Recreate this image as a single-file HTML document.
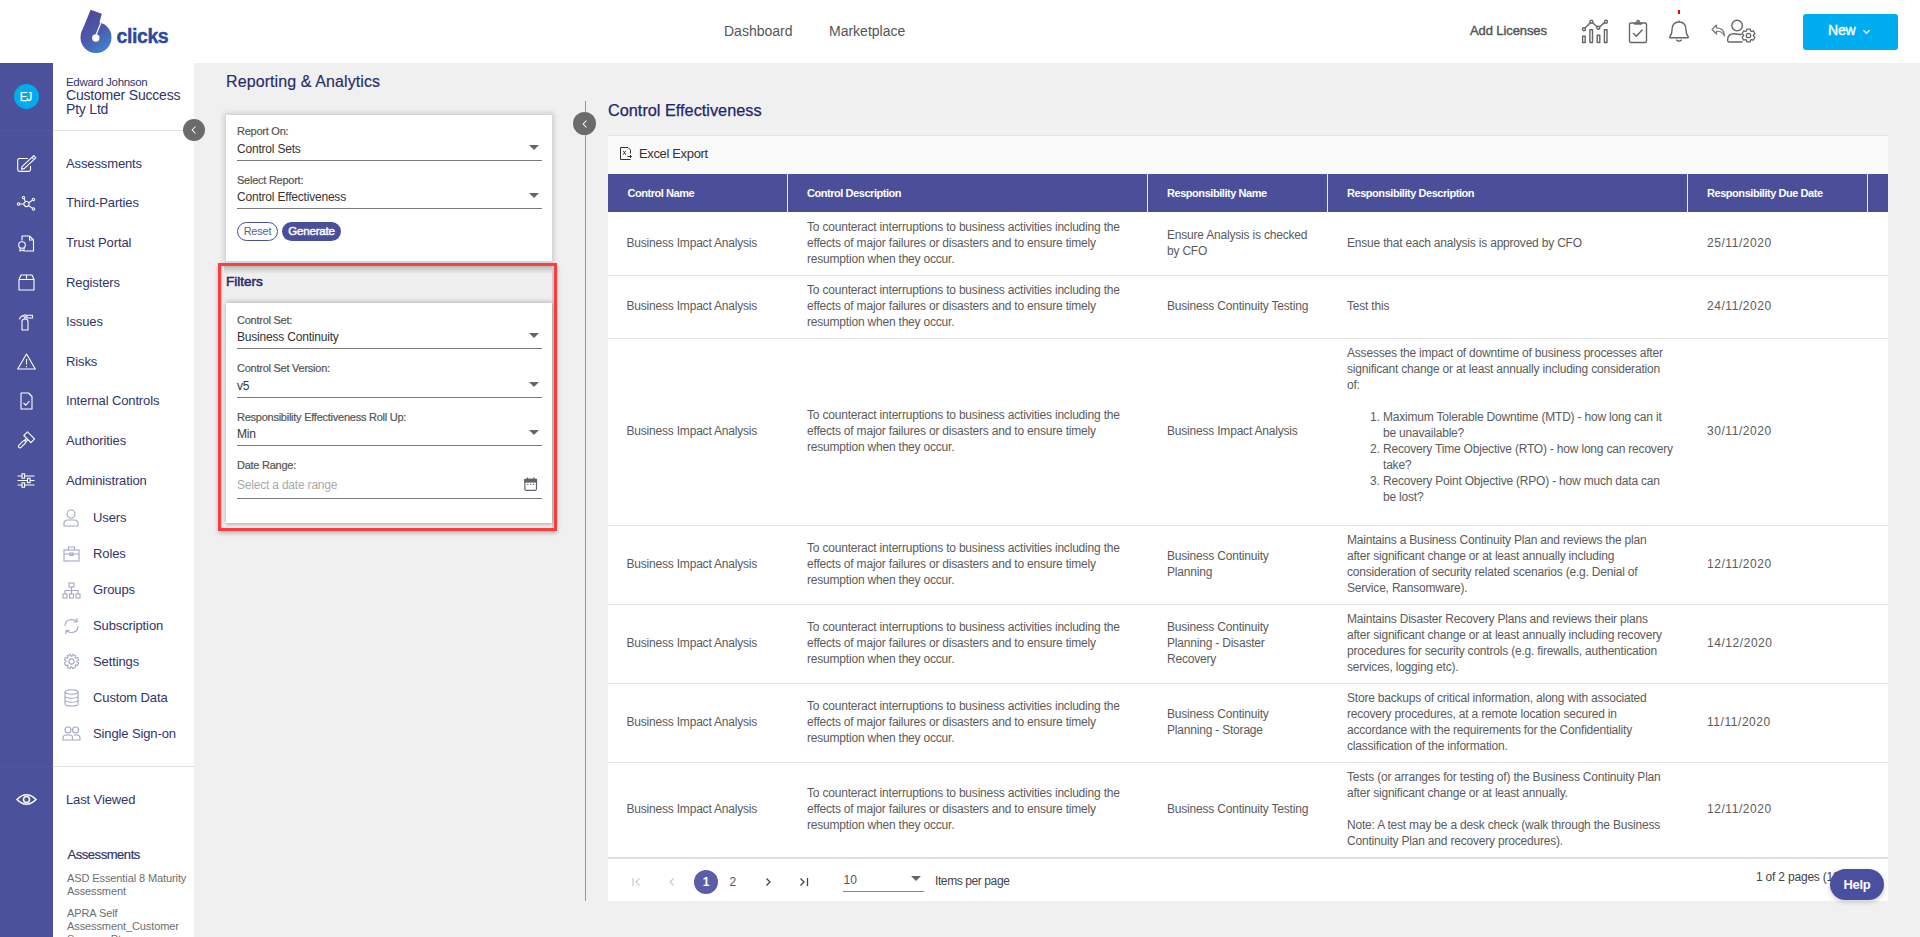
<!DOCTYPE html>
<html><head><meta charset="utf-8">
<style>
*{box-sizing:border-box;margin:0;padding:0}
html,body{width:1920px;height:937px;overflow:hidden;background:#f0f0f0;font-family:"Liberation Sans",sans-serif;}
.abs{position:absolute}
#hdr{position:absolute;left:0;top:0;width:1920px;height:63px;background:#fff}
#rail{position:absolute;left:0;top:63px;width:53px;height:874px;background:#4c519b}
#nav{position:absolute;left:53px;top:63px;width:141px;height:874px;background:#fff}
.t{position:absolute;white-space:nowrap;line-height:1}
.ni{position:absolute;left:13px;font-size:13px;color:#30346b;white-space:nowrap;line-height:1;letter-spacing:-0.12px}
.si{position:absolute;left:40px;font-size:13px;color:#30346b;white-space:nowrap;line-height:1;letter-spacing:-0.12px}
.sic{position:absolute;left:9px;width:18px;height:18px}
.ric{position:absolute;left:16px;width:20px;height:20px}
svg{display:block;overflow:visible}
.th{position:absolute;top:188px;font-size:11px;font-weight:bold;color:#fff;white-space:nowrap;line-height:1;letter-spacing:-0.45px}
.row{position:absolute;left:608px;width:1280px;border-bottom:1px solid #e2e2e2}
.td{position:absolute;top:-1px;display:flex;align-items:center;font-size:12px;line-height:16px;color:#5b5b5b;white-space:nowrap;letter-spacing:-0.2px}
.ol{list-style:none;margin:0;padding:0}
.ol li{position:relative;padding-left:36px}
.ol .n{position:absolute;left:23px}
.card{background:#fff;box-shadow:0 0 5px 2px rgba(0,0,0,0.15)}
.lbl{position:absolute;font-size:11px;color:#555;white-space:nowrap;line-height:1;letter-spacing:-0.25px;-webkit-text-stroke:0.2px #555}
.val{position:absolute;font-size:12px;color:#333;white-space:nowrap;line-height:1;letter-spacing:-0.2px}
.uline{position:absolute;height:1px;background:#7a7a7a}
.tri{position:absolute;width:0;height:0;border-left:5px solid transparent;border-right:5px solid transparent;border-top:5px solid #666}

</style></head>
<body>
<!-- HEADER -->
<div id="hdr">
  <svg class="abs" style="left:60px;top:0px" width="60" height="60" viewBox="0 0 60 60">
    <defs>
      <linearGradient id="lg" gradientUnits="userSpaceOnUse" x1="24" y1="20" x2="48" y2="50"><stop offset="0" stop-color="#4d4b9c"/><stop offset="0.45" stop-color="#4b5aab"/><stop offset="1" stop-color="#3e84d0"/></linearGradient>
    </defs>
    <path d="M30.6 9.7 L41.8 13.8 L36.6 33 L36 37.5 L21.64 31.65 Z" fill="url(#lg)"/>
    <circle cx="36" cy="37.5" r="15.5" fill="url(#lg)"/>
    <path d="M41.6 21 L36.2 34.5" stroke="#fff" stroke-width="1.2"/>
    <circle cx="35.8" cy="38" r="3.7" fill="#fff"/>
  </svg>
  <div class="t" style="left:116.5px;top:27px;font-size:19.5px;font-weight:bold;color:#2c48a0;letter-spacing:-0.4px;-webkit-text-stroke:0.4px #2c48a0">clicks</div>
  <div class="t" style="left:724px;top:24px;font-size:14px;color:#555">Dashboard</div>
  <div class="t" style="left:829px;top:24px;font-size:14px;color:#555">Marketplace</div>
  <div class="t" style="left:1470px;top:24px;font-size:13px;color:#555;letter-spacing:-0.1px;-webkit-text-stroke:0.4px #555">Add Licenses</div>
  <div class="abs" style="left:1803px;top:14px;width:95px;height:36px;background:#00acf0;border-radius:3px"></div>

  <!-- chart icon -->
  <svg class="abs" style="left:1581px;top:19px" width="28" height="25" viewBox="0 0 28 25" fill="none" stroke="#666" stroke-width="1.4" stroke-linejoin="round">
    <circle cx="2.9" cy="10.2" r="1.5"/><circle cx="10.4" cy="2.7" r="1.5"/><circle cx="17.3" cy="8.7" r="1.5"/><circle cx="24.9" cy="2.7" r="1.5"/>
    <path d="M4 9.1 L9.3 3.8 M11.6 3.7 L16.1 7.7 M18.6 7.8 L23.6 3.6"/>
    <rect x="1.6" y="17.2" width="2.6" height="6.3"/><rect x="8.9" y="10.7" width="2.6" height="12.8"/><rect x="16.2" y="16.2" width="2.6" height="7.3"/><rect x="23.4" y="10.7" width="2.6" height="12.8"/>
  </svg>
  <!-- clipboard -->
  <svg class="abs" style="left:1628px;top:19px" width="20" height="25" viewBox="0 0 20 25" fill="none" stroke="#666" stroke-width="1.4" stroke-linejoin="round">
    <rect x="1.5" y="4" width="17" height="19.5" rx="1.5"/><path d="M6 4.8 H14" stroke-width="1.8"/><circle cx="10" cy="2.8" r="1.3"/>
    <path d="M5 14 L8.3 17.2 L14.5 10.5"/>
  </svg>
  <!-- bell -->
  <svg class="abs" style="left:1668px;top:19px" width="22" height="25" viewBox="0 0 22 25" fill="none" stroke="#666" stroke-width="1.4" stroke-linejoin="round">
    <path d="M11 1.5 V3 M11 3 Q4 3 4 11 Q4 15 2 17.5 Q1 19 3 18.8 H19 Q21 19 20 17.5 Q18 15 18 11 Q18 3 11 3 Z"/><path d="M8.3 20.8 Q11 23.5 13.7 20.8"/>
  </svg>
  <div class="abs" style="left:1678px;top:10px;width:2px;height:4px;background:#f00"></div>
  <!-- reply arrow -->
  <svg class="abs" style="left:1711px;top:24px" width="16" height="14" viewBox="0 0 16 14" fill="none" stroke="#777" stroke-width="1.2" stroke-linejoin="round">
    <path d="M5.5 1 L1 5.5 L5.5 10 V7.3 Q11 6.8 13.5 12 Q13.5 4 5.5 3.8 Z"/>
  </svg>
  <!-- user gear -->
  <svg class="abs" style="left:1726px;top:19px" width="31" height="25" viewBox="0 0 31 25" fill="none" stroke="#666" stroke-width="1.4" stroke-linejoin="round">
    <circle cx="11.1" cy="6.6" r="5.3"/><path d="M16.5 23 H3 Q1.6 23 1.6 21.3 Q1.6 14.8 8 14.8 Q10.5 14.8 12 15.3 Q13.5 15.6 15.5 15.3"/>
  </svg>
  <svg class="abs" style="left:1740.2px;top:26.5px" width="17" height="17" viewBox="-8.5 -8.5 17 17" fill="#fff" stroke="#666" stroke-width="1.3" stroke-linejoin="round"><path d="M2.02 4.57 L1.72 6.47 L-1.72 6.47 L-2.02 4.57 L-2.95 4.04 L-4.75 4.73 L-6.47 1.75 L-4.97 0.54 L-4.97 -0.54 L-6.47 -1.75 L-4.75 -4.73 L-2.95 -4.04 L-2.02 -4.57 L-1.72 -6.47 L1.72 -6.47 L2.02 -4.57 L2.95 -4.04 L4.75 -4.73 L6.47 -1.75 L4.97 -0.54 L4.97 0.54 L6.47 1.75 L4.75 4.73 L2.95 4.04 Z"/><circle cx="0" cy="0" r="2.2"/></svg>
  <div class="t" style="left:1828px;top:23px;font-size:14px;color:#fff;letter-spacing:-0.2px;-webkit-text-stroke:0.4px #fff">New</div>
  <svg class="abs" style="left:1861.5px;top:28.5px" width="9" height="6" viewBox="0 0 9 6" fill="none" stroke="#fff" stroke-width="1.4"><path d="M1.5 1.2 L4.5 4.2 L7.5 1.2"/></svg>
</div>
<!-- RAIL -->
<div id="rail">
  <div class="abs" style="left:14px;top:21px;width:25px;height:25px;border-radius:50%;background:#00acf0;color:#fff;font-size:12px;text-align:center;line-height:25px;-webkit-text-stroke:0.25px #fff"><span style="display:inline-block;transform:translate(-0.5px,1px) scaleX(0.95);letter-spacing:-0.9px">EJ</span></div>
  <div class="abs" style="left:0;top:67px;width:53px;height:1px;background:repeating-linear-gradient(90deg,#6367aa 0 1px,transparent 1px 4px)"></div>

  <!-- pencil -->
  <svg class="abs" style="left:12px;top:87px" width="30" height="26" viewBox="0 0 30 26" fill="none" stroke="#fff" stroke-width="1.1" stroke-linejoin="round">
    <path d="M15.8 8.5 H7.5 Q5.7 8.5 5.7 10.3 V19.6 Q5.7 21.4 7.5 21.4 H16.7 Q18.5 21.4 18.5 19.6 V16.1"/>
    <path d="M9.4 19.2 L10.2 16.4 L21.8 5.6 L23.8 7.8 L12.2 18.6 Z M20 7.3 L22 9.5"/>
  </svg>
  <!-- network -->
  <svg class="abs" style="left:17px;top:133px" width="19" height="15" viewBox="0 0 19 15" fill="none" stroke="#fff" stroke-width="1.05">
    <circle cx="9.5" cy="8" r="2.6"/><circle cx="6.5" cy="1.6" r="1.2"/><circle cx="16.5" cy="3.5" r="1.2"/><circle cx="1.6" cy="8" r="1.2"/><circle cx="16.5" cy="13" r="1.2"/>
    <path d="M7 2.8 L8.5 5.6 M15.4 4.2 L11.8 6.8 M2.8 8 H6.9 M15.4 12.2 L11.6 9.6"/>
  </svg>
  <!-- cert doc -->
  <svg class="abs" style="left:17px;top:172px" width="18" height="17" viewBox="0 0 18 17" fill="none" stroke="#fff" stroke-width="1.1" stroke-linejoin="round">
    <path d="M5 5.5 V1 H12.5 L16.5 5 V16 H7.5"/><path d="M12.5 1 V5 H16.5"/>
    <circle cx="5" cy="10" r="3.3"/><path d="M3 13 V16 L5 15 L7 16 V13"/>
  </svg>
  <!-- box -->
  <svg class="abs" style="left:18px;top:211px" width="17" height="17" viewBox="0 0 17 17" fill="none" stroke="#fff" stroke-width="1.1" stroke-linejoin="round">
    <path d="M1 5.5 L3 1 H14 L16 5.5 V16 H1 Z M1 5.5 H16 M8.5 1 V5.5"/>
  </svg>
  <!-- extinguisher -->
  <svg class="abs" style="left:18px;top:250px" width="16" height="18" viewBox="0 0 16 18" fill="none" stroke="#fff" stroke-width="1.1" stroke-linejoin="round">
    <path d="M4 17 V8.7 Q4 6 7 6 Q10 6 10 8.7 V17 Z"/><path d="M7 6 V4.2"/><circle cx="7" cy="3" r="1.2"/><rect x="8.8" y="2.2" width="5.7" height="2.8"/><path d="M5.8 2.6 Q2.6 2.8 1.2 6.4"/>
  </svg>
  <!-- warning -->
  <svg class="abs" style="left:17px;top:290px" width="19" height="17" viewBox="0 0 19 17" fill="none" stroke="#fff" stroke-width="1.1" stroke-linejoin="round">
    <path d="M9.5 1 L18.3 16 H0.7 Z"/><path d="M9.5 6 V11.5 M9.5 13 V14.2"/>
  </svg>
  <!-- doc check -->
  <svg class="abs" style="left:20px;top:329px" width="13" height="18" viewBox="0 0 13 18" fill="none" stroke="#fff" stroke-width="1.1" stroke-linejoin="round">
    <path d="M1 1 H8.5 L12 4.5 V17 H1 Z"/><path d="M3.5 11 L5.8 13.2 L9.5 9"/>
  </svg>
  <!-- gavel -->
  <svg class="abs" style="left:17px;top:369px" width="18" height="17" viewBox="0 0 18 17" fill="none" stroke="#fff" stroke-width="1.1" stroke-linejoin="round">
    <g transform="translate(12.2,5.2) rotate(45)"><rect x="-5" y="-2.6" width="10" height="5.2"/></g>
    <g transform="translate(9.1,8.1) rotate(-45)"><rect x="-1.3" y="-1" width="2.6" height="2"/></g>
    <g transform="translate(5.1,12.2) rotate(-45)"><rect x="-4.6" y="-1.5" width="9.2" height="3" rx="1.5"/></g>
  </svg>
  <!-- sliders -->
  <svg class="abs" style="left:17px;top:410px" width="18" height="15" viewBox="0 0 18 15" fill="none" stroke="#fff" stroke-width="1.1">
    <path d="M0.5 3 H17.5 M0.5 7.5 H17.5 M0.5 12 H17.5"/>
    <rect x="5" y="0.8" width="2.6" height="4.4" fill="#4c519b"/><rect x="10.5" y="5.3" width="2.6" height="4.4" fill="#4c519b"/><rect x="5" y="9.8" width="2.6" height="4.4" fill="#4c519b"/>
  </svg>
  <div class="abs" style="left:0;top:703px;width:53px;height:1px;background:repeating-linear-gradient(90deg,#6367aa 0 1px,transparent 1px 4px)"></div>
  <!-- eye -->
  <svg class="abs" style="left:16px;top:730px" width="21" height="13" viewBox="0 0 21 13" fill="none" stroke="#fff" stroke-width="1.5">
    <path d="M1 6.5 Q10.5 -3 20 6.5 Q10.5 16 1 6.5 Z"/><circle cx="10.5" cy="6.5" r="3"/>
  </svg>
</div>
<!-- NAV -->
<div id="nav">
  <div class="t" style="left:13px;top:14px;font-size:11.5px;color:#30346b;letter-spacing:-0.3px">Edward Johnson</div>
  <div class="t" style="left:13px;top:25px;font-size:14px;color:#30346b;letter-spacing:-0.2px;line-height:14px">Customer Success<br>Pty Ltd</div>
  <div class="abs" style="left:0;top:67px;width:141px;height:1px;background:#e0e0e0"></div>
  <div class="ni" style="top:94px">Assessments</div>
  <div class="ni" style="top:133px">Third-Parties</div>
  <div class="ni" style="top:173px">Trust Portal</div>
  <div class="ni" style="top:213px">Registers</div>
  <div class="ni" style="top:252px">Issues</div>
  <div class="ni" style="top:292px">Risks</div>
  <div class="ni" style="top:331px">Internal Controls</div>
  <div class="ni" style="top:371px">Authorities</div>
  <div class="ni" style="top:411px">Administration</div>

  <!-- sub icons -->
  <svg class="abs" style="left:10px;top:446px" width="16" height="18" viewBox="0 0 16 18" fill="none" stroke="#a3a6c4" stroke-width="1.1"><circle cx="8" cy="5" r="4"/><path d="M1 17 V14.5 Q1 11 5 11 H11 Q15 11 15 14.5 V17 Z"/></svg>
  <svg class="abs" style="left:10px;top:483px" width="17" height="16" viewBox="0 0 17 16" fill="none" stroke="#a3a6c4" stroke-width="1.1"><rect x="1" y="4" width="15" height="11"/><path d="M5.5 4 V1 H11.5 V4 M1 8 H16"/><rect x="7" y="7" width="3" height="2.5"/></svg>
  <svg class="abs" style="left:9px;top:519px" width="19" height="17" viewBox="0 0 19 17" fill="none" stroke="#a3a6c4" stroke-width="1.1"><rect x="7" y="1" width="5" height="4"/><rect x="1" y="12" width="4" height="4"/><rect x="7.5" y="12" width="4" height="4"/><rect x="14" y="12" width="4" height="4"/><path d="M9.5 5 V12 M3 12 V8.5 H16 V12"/></svg>
  <svg class="abs" style="left:10px;top:554px" width="17" height="18" viewBox="0 0 17 18" fill="none" stroke="#a3a6c4" stroke-width="1.1"><path d="M2 9 Q2 3 8.5 2.5 Q12 2.5 14 4.5 M15 9 Q15 15 8.5 15.5 Q5 15.5 3 13.5"/><path d="M14 1 V5 H10.5 M3 17 V13.5 H6.5"/></svg>
  <svg class="abs" style="left:10px;top:590px" width="17" height="17" viewBox="-8.5 -8.5 17 17" fill="none" stroke="#a3a6c4" stroke-width="1.1"><path d="M5.38 0.50 L7.07 1.38 L5.97 4.02 L4.16 3.45 L3.45 4.16 L4.02 5.97 L1.38 7.07 L0.50 5.38 L-0.50 5.38 L-1.38 7.07 L-4.02 5.97 L-3.45 4.16 L-4.16 3.45 L-5.97 4.02 L-7.07 1.38 L-5.38 0.50 L-5.38 -0.50 L-7.07 -1.38 L-5.97 -4.02 L-4.16 -3.45 L-3.45 -4.16 L-4.02 -5.97 L-1.38 -7.07 L-0.50 -5.38 L0.50 -5.38 L1.38 -7.07 L4.02 -5.97 L3.45 -4.16 L4.16 -3.45 L5.97 -4.02 L7.07 -1.38 L5.38 -0.50 Z"/><circle r="2.6"/></svg>
  <svg class="abs" style="left:11px;top:626px" width="15" height="18" viewBox="0 0 15 18" fill="none" stroke="#a3a6c4" stroke-width="1.1"><ellipse cx="7.5" cy="3" rx="6.5" ry="2.2"/><path d="M1 3 V15 Q1 17 7.5 17 Q14 17 14 15 V3 M1 7 Q1 9.2 7.5 9.2 Q14 9.2 14 7 M1 11 Q1 13.2 7.5 13.2 Q14 13.2 14 11"/></svg>
  <svg class="abs" style="left:9px;top:663px" width="19" height="15" viewBox="0 0 19 15" fill="none" stroke="#a3a6c4" stroke-width="1.1"><circle cx="6" cy="4" r="3"/><circle cx="13.5" cy="4" r="3"/><path d="M1 14 V12 Q1 9 4 9 H8 Q10.5 9 10.5 12 V14 Z M10.5 14 H18 V12 Q18 9 15 9 H11.5"/></svg>
  <div class="si" style="top:448px">Users</div>
  <div class="si" style="top:484px">Roles</div>
  <div class="si" style="top:520px">Groups</div>
  <div class="si" style="top:556px">Subscription</div>
  <div class="si" style="top:592px">Settings</div>
  <div class="si" style="top:628px">Custom Data</div>
  <div class="si" style="top:664px">Single Sign-on</div>
  <div class="abs" style="left:0;top:703px;width:141px;height:1px;background:#e0e0e0"></div>
  <div class="ni" style="top:730px">Last Viewed</div>
  <div class="ni" style="top:785px;left:14.5px;-webkit-text-stroke:0.2px #30346b;letter-spacing:-0.45px">Assessments</div>
  <div class="t" style="left:14px;top:809px;font-size:11px;color:#6e6e6e;line-height:13px;letter-spacing:-0.1px">ASD Essential 8 Maturity<br>Assessment</div>
  <div class="t" style="left:14px;top:844px;font-size:11px;color:#6e6e6e;line-height:13px;letter-spacing:-0.1px">APRA Self<br>Assessment_Customer<br>Success Pty</div>
</div>

<!-- MAIN LEFT PANEL -->
<div class="t" style="left:226px;top:73.5px;font-size:16px;color:#282c6a;letter-spacing:0.1px;-webkit-text-stroke:0.15px #282c6a">Reporting &amp; Analytics</div>
<div class="abs" style="left:183px;top:119px;width:22px;height:22px;border-radius:50%;background:#6b6b6b"></div>
<svg class="abs" style="left:190px;top:125px" width="8" height="10" viewBox="0 0 8 10" fill="none" stroke="#fff" stroke-width="1.05"><path d="M5.5 1.5 L2.2 5 L5.5 8.5"/></svg>

<div class="abs card" style="left:226px;top:115px;width:326px;height:146px"></div>
<div class="lbl" style="left:237px;top:126px">Report On:</div>
<div class="val" style="left:237px;top:143px">Control Sets</div>
<div class="uline" style="left:237px;top:160px;width:305px"></div>
<div class="tri" style="left:529px;top:145px"></div>
<div class="lbl" style="left:237px;top:175px">Select Report:</div>
<div class="val" style="left:237px;top:191px">Control Effectiveness</div>
<div class="uline" style="left:237px;top:208px;width:305px"></div>
<div class="tri" style="left:529px;top:193px"></div>
<div class="abs" style="left:237px;top:222px;width:41px;height:19px;border:1px solid #4b4f9b;border-radius:10px;color:#5b5e88;font-size:11px;text-align:center;line-height:17px;letter-spacing:-0.2px">Reset</div>
<div class="abs" style="left:282px;top:222px;width:59px;height:19px;background:#4b4f9b;border-radius:10px;color:#fff;font-size:11.5px;text-align:center;line-height:19px;letter-spacing:-0.2px;-webkit-text-stroke:0.45px #fff">Generate</div>

<!-- FILTERS -->
<div class="abs" style="left:218px;top:263px;width:339px;height:268px;border:3px solid #fc3d3d;background:#efefef;box-shadow:0 2px 4px rgba(0,0,0,0.25)"></div>
<div class="abs" style="left:221px;top:266px;width:333px;height:8px;background:linear-gradient(#b9b9b9,#d6d6d6 50%,#efefef)"></div><div class="abs" style="left:221px;top:266px;width:3px;height:262px;background:linear-gradient(90deg,#d0d0d0,#efefef)"></div><div class="abs" style="left:552px;top:266px;width:2px;height:262px;background:#cdcdcd"></div>
<div class="t" style="left:226px;top:275px;font-size:13.5px;color:#2a2d6b;letter-spacing:0px;-webkit-text-stroke:0.55px #2a2d6b">Filters</div>
<div class="abs card" style="left:226px;top:303px;width:326px;height:219.5px;box-shadow:0 -2px 4px rgba(0,0,0,0.18),0 2px 3px rgba(0,0,0,0.2)"></div>
<div class="lbl" style="left:237px;top:315px">Control Set:</div>
<div class="val" style="left:237px;top:331px">Business Continuity</div>
<div class="uline" style="left:237px;top:348px;width:305px"></div>
<div class="tri" style="left:529px;top:333px"></div>
<div class="lbl" style="left:237px;top:363px">Control Set Version:</div>
<div class="val" style="left:237px;top:380px">v5</div>
<div class="uline" style="left:237px;top:397px;width:305px"></div>
<div class="tri" style="left:529px;top:382px"></div>
<div class="lbl" style="left:237px;top:412px">Responsibility Effectiveness Roll Up:</div>
<div class="val" style="left:237px;top:428px">Min</div>
<div class="uline" style="left:237px;top:445px;width:305px"></div>
<div class="tri" style="left:529px;top:430px"></div>
<div class="lbl" style="left:237px;top:460px">Date Range:</div>
<div class="val" style="left:237px;top:479px;color:#a9a9a9">Select a date range</div>
<div class="uline" style="left:237px;top:498px;width:305px"></div>
<svg class="abs" style="left:524px;top:477px" width="14" height="14" viewBox="0 0 14 14" fill="none" stroke="#5f6368" stroke-width="1.2"><rect x="0.9" y="2.4" width="11.6" height="10.9" rx="1.2"/><rect x="0.9" y="2.4" width="11.6" height="2.6" fill="#5f6368"/><path d="M3.5 0.6 V3 M9.9 0.6 V3" stroke-width="1.3"/><path d="M3.2 7.3 h1.2 M6.1 7.3 h1.2 M9 7.3 h1.2" stroke-width="1.2"/></svg>

<!-- divider + collapse -->
<div class="abs" style="left:585px;top:101px;width:1px;height:800px;background:#959595"></div>
<div class="abs" style="left:573px;top:112px;width:23px;height:23px;border-radius:50%;background:#6b6b6b"></div>
<svg class="abs" style="left:581px;top:119px" width="8" height="10" viewBox="0 0 8 10" fill="none" stroke="#fff" stroke-width="1.05"><path d="M5.5 1.5 L2.2 5 L5.5 8.5"/></svg>

<!-- RIGHT -->
<div class="t" style="left:608px;top:101.5px;font-size:16.3px;color:#22266a;-webkit-text-stroke:0.25px #22266a">Control Effectiveness</div>
<div class="abs" style="left:608px;top:135px;width:1280px;height:766px;background:#fff;border-top:1px solid #e4e4e4"></div>
<div class="abs" style="left:608px;top:136px;width:1280px;height:38px;background:#fafafa"></div>
<svg class="abs" style="left:619px;top:146px" width="15" height="15" viewBox="0 0 15 15" fill="none" stroke="#333" stroke-width="1"><path d="M11.5 7.5 V4 L9 1.5 H1.5 V13.5 H11.5"/><path d="M4.2 4.8 L6.8 8.8 M6.8 4.8 L4.2 8.8" stroke-width="0.9"/><path d="M8.5 10.5 H12.5 M11 9 L12.5 10.5 L11 12"/></svg>
<div class="t" style="left:639px;top:147px;font-size:13px;color:#333;letter-spacing:-0.35px">Excel Export</div>
<!-- TABLE -->
<div class="abs" style="left:608px;top:174px;width:1280px;height:38px;background:#4b4f9a"></div>
<div class="th" style="left:627.5px">Control Name</div>
<div class="abs" style="left:787px;top:174px;width:1px;height:38px;background:#e8e8f0"></div>
<div class="th" style="left:807px">Control Description</div>
<div class="abs" style="left:1147px;top:174px;width:1px;height:38px;background:#e8e8f0"></div>
<div class="th" style="left:1167px">Responsibility Name</div>
<div class="abs" style="left:1327px;top:174px;width:1px;height:38px;background:#e8e8f0"></div>
<div class="th" style="left:1347px">Responsibility Description</div>
<div class="abs" style="left:1687px;top:174px;width:1px;height:38px;background:#e8e8f0"></div>
<div class="th" style="left:1707px">Responsibility Due Date</div>
<div class="abs" style="left:1867px;top:174px;width:1px;height:38px;background:#e8e8f0"></div>
<div class="row" style="top:212px;height:64px">
<div class="td" style="left:18.5px;width:159px;height:63px"><div>Business Impact Analysis</div></div>
<div class="td" style="left:199px;width:340px;height:63px"><div>To counteract interruptions to business activities including the<br>effects of major failures or disasters and to ensure timely<br>resumption when they occur.</div></div>
<div class="td" style="left:559px;width:160px;height:63px"><div>Ensure Analysis is checked<br>by CFO</div></div>
<div class="td" style="left:739px;width:340px;height:63px"><div>Ensue that each analysis is approved by CFO</div></div>
<div class="td" style="letter-spacing:0.55px;left:1099px;width:160px;height:63px"><div>25/11/2020</div></div>
</div>
<div class="row" style="top:276px;height:63px">
<div class="td" style="left:18.5px;width:159px;height:62px"><div>Business Impact Analysis</div></div>
<div class="td" style="left:199px;width:340px;height:62px"><div>To counteract interruptions to business activities including the<br>effects of major failures or disasters and to ensure timely<br>resumption when they occur.</div></div>
<div class="td" style="left:559px;width:160px;height:62px"><div>Business Continuity Testing</div></div>
<div class="td" style="left:739px;width:340px;height:62px"><div>Test this</div></div>
<div class="td" style="letter-spacing:0.55px;left:1099px;width:160px;height:62px"><div>24/11/2020</div></div>
</div>
<div class="row" style="top:339px;height:187px">
<div class="td" style="left:18.5px;width:159px;height:186px"><div>Business Impact Analysis</div></div>
<div class="td" style="left:199px;width:340px;height:186px"><div>To counteract interruptions to business activities including the<br>effects of major failures or disasters and to ensure timely<br>resumption when they occur.</div></div>
<div class="td" style="left:559px;width:160px;height:186px"><div>Business Impact Analysis</div></div>
<div class="td" style="left:739px;width:340px;height:186px"><div style="padding-bottom:12px"><div>Assesses the impact of downtime of business processes after<br>significant change or at least annually including consideration<br>of:<br>&nbsp;</div><ol class="ol"><li><span class="n">1.</span>Maximum Tolerable Downtime (MTD) - how long can it<br>be unavailable?</li><li><span class="n">2.</span>Recovery Time Objective (RTO) - how long can recovery<br>take?</li><li><span class="n">3.</span>Recovery Point Objective (RPO) - how much data can<br>be lost?</li></ol></div></div>
<div class="td" style="letter-spacing:0.55px;left:1099px;width:160px;height:186px"><div>30/11/2020</div></div>
</div>
<div class="row" style="top:526px;height:79px">
<div class="td" style="left:18.5px;width:159px;height:78px"><div>Business Impact Analysis</div></div>
<div class="td" style="left:199px;width:340px;height:78px"><div>To counteract interruptions to business activities including the<br>effects of major failures or disasters and to ensure timely<br>resumption when they occur.</div></div>
<div class="td" style="left:559px;width:160px;height:78px"><div>Business Continuity<br>Planning</div></div>
<div class="td" style="left:739px;width:340px;height:78px"><div>Maintains a Business Continuity Plan and reviews the plan<br>after significant change or at least annually including<br>consideration of security related scenarios (e.g. Denial of<br>Service, Ransomware).</div></div>
<div class="td" style="letter-spacing:0.55px;left:1099px;width:160px;height:78px"><div>12/11/2020</div></div>
</div>
<div class="row" style="top:605px;height:79px">
<div class="td" style="left:18.5px;width:159px;height:78px"><div>Business Impact Analysis</div></div>
<div class="td" style="left:199px;width:340px;height:78px"><div>To counteract interruptions to business activities including the<br>effects of major failures or disasters and to ensure timely<br>resumption when they occur.</div></div>
<div class="td" style="left:559px;width:160px;height:78px"><div>Business Continuity<br>Planning - Disaster<br>Recovery</div></div>
<div class="td" style="left:739px;width:340px;height:78px"><div>Maintains Disaster Recovery Plans and reviews their plans<br>after significant change or at least annually including recovery<br>procedures for security controls (e.g. firewalls, authentication<br>services, logging etc).</div></div>
<div class="td" style="letter-spacing:0.55px;left:1099px;width:160px;height:78px"><div>14/12/2020</div></div>
</div>
<div class="row" style="top:684px;height:79px">
<div class="td" style="left:18.5px;width:159px;height:78px"><div>Business Impact Analysis</div></div>
<div class="td" style="left:199px;width:340px;height:78px"><div>To counteract interruptions to business activities including the<br>effects of major failures or disasters and to ensure timely<br>resumption when they occur.</div></div>
<div class="td" style="left:559px;width:160px;height:78px"><div>Business Continuity<br>Planning - Storage</div></div>
<div class="td" style="left:739px;width:340px;height:78px"><div>Store backups of critical information, along with associated<br>recovery procedures, at a remote location secured in<br>accordance with the requirements for the Confidentiality<br>classification of the information.</div></div>
<div class="td" style="letter-spacing:0.55px;left:1099px;width:160px;height:78px"><div>11/11/2020</div></div>
</div>
<div class="row" style="top:763px;height:94px;border-bottom:0">
<div class="td" style="left:18.5px;width:159px;height:93px"><div>Business Impact Analysis</div></div>
<div class="td" style="left:199px;width:340px;height:93px"><div>To counteract interruptions to business activities including the<br>effects of major failures or disasters and to ensure timely<br>resumption when they occur.</div></div>
<div class="td" style="left:559px;width:160px;height:93px"><div>Business Continuity Testing</div></div>
<div class="td" style="left:739px;width:340px;height:93px"><div>Tests (or arranges for testing of) the Business Continuity Plan<br>after significant change or at least annually.<br>&nbsp;<br>Note: A test may be a desk check (walk through the Business<br>Continuity Plan and recovery procedures).</div></div>
<div class="td" style="letter-spacing:0.55px;left:1099px;width:160px;height:93px"><div>12/11/2020</div></div>
</div>
<div class="abs" style="left:608px;top:857px;width:1280px;height:2px;background:#e0e0e0"></div>
<svg class="abs" style="left:632px;top:877px" width="9" height="10" viewBox="0 0 9 10" fill="none" stroke="#c8c8c8" stroke-width="1.2"><path d="M1 1 V9 M7.5 1.5 L4 5 L7.5 8.5"/></svg>
<svg class="abs" style="left:668px;top:877px" width="7" height="10" viewBox="0 0 7 10" fill="none" stroke="#c8c8c8" stroke-width="1.2"><path d="M5.5 1.5 L2 5 L5.5 8.5"/></svg>
<div class="abs" style="left:694px;top:870px;width:24px;height:24px;border-radius:50%;background:#5a5ea6;color:#fff;font-size:12px;font-weight:bold;text-align:center;line-height:24px">1</div>
<div class="t" style="left:729.5px;top:875.5px;font-size:12px;color:#555">2</div>
<svg class="abs" style="left:765px;top:877px" width="7" height="10" viewBox="0 0 7 10" fill="none" stroke="#444" stroke-width="1.3"><path d="M1.5 1.5 L5 5 L1.5 8.5"/></svg>
<svg class="abs" style="left:799px;top:877px" width="10" height="10" viewBox="0 0 10 10" fill="none" stroke="#444" stroke-width="1.3"><path d="M1.5 1.5 L5 5 L1.5 8.5 M8.5 1 V9"/></svg>
<div class="t" style="left:843.5px;top:874px;font-size:12px;color:#555">10</div>
<div class="abs" style="left:843px;top:891px;width:81px;height:1px;background:#888"></div>
<div class="tri" style="left:911px;top:876px"></div>
<div class="t" style="left:935px;top:874.5px;font-size:12px;color:#444;letter-spacing:-0.4px">Items per page</div>
<div class="t" style="left:1756px;top:871px;font-size:12px;color:#444;letter-spacing:-0.2px">1 of 2 pages (11 items)</div>
<div class="abs" style="left:1830px;top:869px;width:54px;height:31px;border-radius:16px;background:#4b4fa0;box-shadow:0 2px 5px rgba(0,0,0,0.2);color:#fff;font-weight:bold;font-size:13px;text-align:center;line-height:31px;letter-spacing:-0.3px">Help</div>

</body></html>
